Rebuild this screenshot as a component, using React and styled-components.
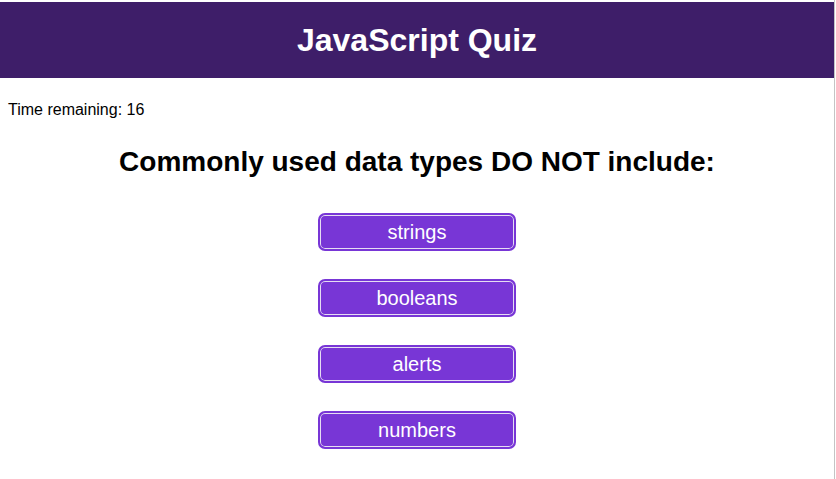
import React from "react";
import styled, { createGlobalStyle } from "styled-components";

const GlobalStyle = createGlobalStyle`
  html, body {
    margin: 0;
    padding: 0;
    background: #fff;
  }
  body {
    font-family: "Liberation Sans", Arial, sans-serif;
    color: #000;
  }
`;

const choices = ["strings", "booleans", "alerts", "numbers"];

export default () => {
  return (
    <Page>
      <GlobalStyle />
      <Header>
        <Title>JavaScript Quiz</Title>
      </Header>
      <Timer>Time remaining: 16</Timer>
      <Question>Commonly used data types DO NOT include:</Question>
      <Choices>
        {choices.map((c) => (
          <Choice key={c}>{c}</Choice>
        ))}
      </Choices>
    </Page>
  );
};

const Page = styled.div`
  width: 835px;
  min-height: 100vh;
  box-sizing: border-box;
  border-right: 1px solid #c4c4c4;
  padding-top: 2px;
`;

const Header = styled.header`
  height: 76px;
  background: #3e1e69;
  display: flex;
  align-items: center;
  justify-content: center;
`;

const Title = styled.h1`
  margin: 0;
  color: #fff;
  font-size: 32px;
  font-weight: bold;
`;

const Timer = styled.p`
  margin: 23px 0 0 8px;
  font-size: 16px;
  line-height: 18px;
`;

const Question = styled.h2`
  margin: 27px 0 0;
  text-align: center;
  font-size: 28px;
  line-height: 32px;
  font-weight: bold;
`;

const Choices = styled.div`
  display: flex;
  flex-direction: column;
  align-items: center;
  gap: 28px;
  margin-top: 35px;
`;

const Choice = styled.button`
  width: 198px;
  height: 38px;
  box-sizing: border-box;
  background: #7836d6;
  color: #fff;
  border: 2px solid #7836d6;
  border-radius: 7px;
  box-shadow: inset 0 0 0 1px #e6ddf2;
  font-family: "Liberation Sans", Arial, sans-serif;
  font-size: 20px;
  cursor: pointer;
`;
